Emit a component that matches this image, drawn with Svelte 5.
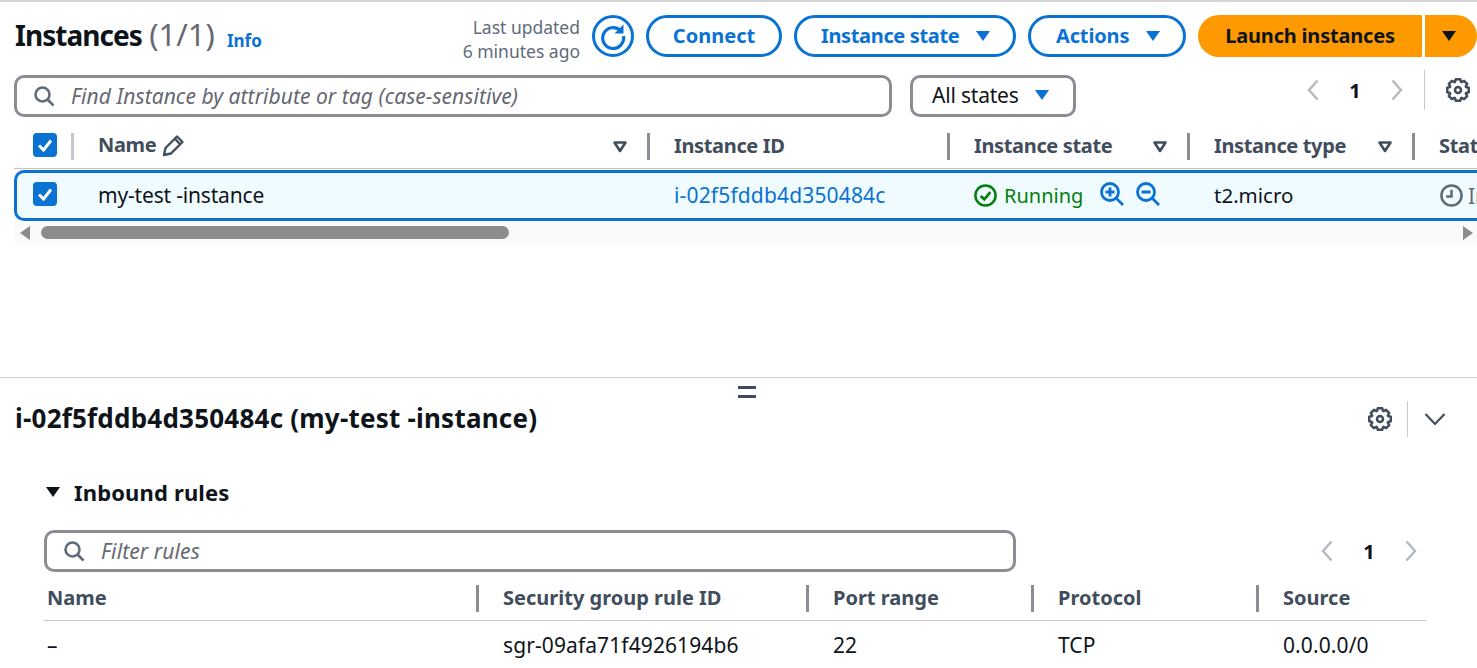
<script>
  const columns = [
    { label: 'Instance ID', sort: false },
    { label: 'Instance state', sort: true },
    { label: 'Instance type', sort: true }
  ];
  const ruleHeads = ['Name', 'Security group rule ID', 'Port range', 'Protocol', 'Source'];
  const ruleCells = ['–', 'sgr-09afa71f4926194b6', '22', 'TCP', '0.0.0.0/0'];

  // 8 toothed gear outline, same one for both settings buttons
  const gearPath = (() => {
    let d = '';
    for (let i = 0; i < 8; i++) {
      const a = (i * Math.PI) / 4;
      const pts = [
        [8.6, a - 0.36],
        [11, a - 0.2],
        [11, a + 0.2],
        [8.6, a + 0.36]
      ];
      for (const [r, t] of pts) {
        d += (d ? 'L' : 'M') + (12 + r * Math.cos(t)).toFixed(2) + ' ' + (12 + r * Math.sin(t)).toFixed(2);
      }
    }
    return d + 'z';
  })();
</script>

{#snippet caret()}
  <svg class="caret" viewBox="0 0 16 12" width="16" height="12"><path d="M1 1h14L8 11z" fill="currentColor" /></svg>
{/snippet}

{#snippet sortIcon()}
  <svg class="sort" viewBox="0 0 16 12" width="16" height="12"><path d="M2.5 1.5h11L8 10z" fill="none" stroke="currentColor" stroke-width="2.6" stroke-linejoin="round" /></svg>
{/snippet}

{#snippet search()}
  <svg viewBox="0 0 22 22" width="22" height="22"><circle cx="9.5" cy="9.5" r="7" fill="none" stroke="#5f6b7a" stroke-width="2.6" /><path d="M14.5 14.5l6 6" stroke="#5f6b7a" stroke-width="2.6" /></svg>
{/snippet}

{#snippet checkbox()}
  <span class="checkbox">
    <svg viewBox="0 0 24 24" width="24" height="24"><path d="M6 12.5l4.5 4.5L18 7.5" fill="none" stroke="#fff" stroke-width="3" /></svg>
  </span>
{/snippet}

{#snippet gear(cls)}
  <svg class={cls} viewBox="0 0 24 24" width="24" height="24">
    <path d={gearPath} fill="none" stroke="#414d5c" stroke-width="2.5" stroke-linejoin="round" />
    <circle cx="12" cy="12" r="3" fill="none" stroke="#414d5c" stroke-width="2.5" />
  </svg>
{/snippet}

{#snippet pager()}
  <div class="pager">
    <svg viewBox="0 0 12 22" width="12" height="22"><path d="M10.5 1.5L2 11l8.5 9.500" fill="none" stroke="#b4b9bf" stroke-width="2.4" /></svg>
    <span>1</span>
    <svg viewBox="0 0 12 22" width="12" height="22"><path d="M1.500 1.500L10 11l-8.500 9.500" fill="none" stroke="#b4b9bf" stroke-width="2.4" /></svg>
  </div>
{/snippet}

<div class="page">
  <section class="instances">
    <header class="top">
      <h1>Instances <span class="count">(1/1)</span></h1>
      <span class="info">Info</span>
      <div class="updated">Last updated<br />6 minutes ago</div>
      <button class="refresh" aria-label="Refresh">
        <svg viewBox="0 0 28 28" width="28" height="28">
          <path d="M21.500 8.500A10.500 10.500 0 1 0 24.500 14" fill="none" stroke="#0972d3" stroke-width="3.2" />
          <path d="M24.500 2.500v9h-9z" fill="#0972d3" />
        </svg>
      </button>
      <button class="btn connect">Connect</button>
      <button class="btn state">Instance state {@render caret()}</button>
      <button class="btn actions">Actions {@render caret()}</button>
      <div class="launch">
        <button class="launch-main">Launch instances</button>
        <button class="launch-drop" aria-label="More launch options">{@render caret()}</button>
      </div>
    </header>

    <div class="filters">
      <div class="search-box main-search">
        {@render search()}
        <span>Find Instance by attribute or tag (case-sensitive)</span>
      </div>
      <div class="select">All states {@render caret()}</div>
      <div class="filter-tools">
        {@render pager()}
        <span class="tool-divider"></span>
        {@render gear('tool-gear')}
      </div>
    </div>

    <div class="grid-wrap">
      <div class="grid head">
        <div class="cell check-cell">{@render checkbox()}<i class="sep"></i></div>
        <div class="cell name-head"><b>Name</b>
          <svg class="pencil" viewBox="0 0 24 24" width="24" height="24"><path d="M3 22l1.500-7L16 3.500l5.500 5.500L10 20.500z M14 6l5.500 5.500" fill="none" stroke="#414d5c" stroke-width="2.4" stroke-linejoin="round" /></svg>
          <span class="push">{@render sortIcon()}</span><i class="sep"></i>
        </div>
        {#each columns as col}
          <div class="cell"><b>{col.label}</b>
            {#if col.sort}<span class="push">{@render sortIcon()}</span>{/if}
            <i class="sep"></i>
          </div>
        {/each}
        <div class="cell"><b>Status check</b></div>
      </div>

      <div class="grid row">
        <div class="cell check-cell">{@render checkbox()}</div>
        <div class="cell name-cell">my-test -instance</div>
        <div class="cell link">i-02f5fddb4d350484c</div>
        <div class="cell running">
          <svg viewBox="0 0 26 26" width="25" height="25"><circle cx="13" cy="13" r="10.500" fill="none" stroke="#037f0c" stroke-width="2.600" /><path d="M8 13.500l3.800 3.500L18 9.500" fill="none" stroke="#037f0c" stroke-width="2.800" /></svg>
          <span>Running</span>
          <svg class="zoom-plus" viewBox="0 0 26 26" width="26" height="26"><circle cx="11" cy="11" r="8.500" fill="none" stroke="#0972d3" stroke-width="2.800" /><path d="M17 17l7 7M6.500 11h9M11 6.500v9" stroke="#0972d3" stroke-width="2.800" /></svg>
          <svg class="zoom-minus" viewBox="0 0 26 26" width="26" height="26"><circle cx="11" cy="11" r="8.500" fill="none" stroke="#0972d3" stroke-width="2.800" /><path d="M17 17l7 7M6.500 11h9" stroke="#0972d3" stroke-width="2.800" /></svg>
        </div>
        <div class="cell type-cell">t2.micro</div>
        <div class="cell pending">
          <svg viewBox="0 0 26 26" width="25" height="25"><circle cx="13" cy="13" r="10.500" fill="none" stroke="#5f6b7a" stroke-width="2.600" /><path d="M13 7v7H7.500" fill="none" stroke="#5f6b7a" stroke-width="2.600" /></svg>
          <span>Initializing</span>
        </div>
      </div>

      <div class="scrollbar">
        <svg viewBox="0 0 12 16" width="12" height="16"><path d="M11 1v14L1 8z" fill="#8c8c8c" /></svg>
        <div class="track"><div class="thumb"></div></div>
        <svg viewBox="0 0 12 16" width="12" height="16"><path d="M1 1v14l10-7z" fill="#8c8c8c" /></svg>
      </div>
    </div>
  </section>

  <section class="details">
    <div class="handle"><i></i><i></i></div>
    <div class="detail-head">
      <h2>i-02f5fddb4d350484c (my-test -instance)</h2>
      {@render gear('detail-gear')}
      <span class="detail-divider"></span>
      <svg class="collapse" viewBox="0 0 22 14" width="22" height="14"><path d="M1.500 2l9.500 10L20.500 2" fill="none" stroke="#414d5c" stroke-width="2.200" /></svg>
    </div>

    <div class="rules">
      <h3><svg viewBox="0 0 16 12" width="16" height="12"><path d="M1 1h14L8 11z" fill="#0f141a" /></svg>Inbound rules</h3>
      <div class="rule-filter">
        <div class="search-box rule-search">
          {@render search()}
          <span>Filter rules</span>
        </div>
        {@render pager()}
      </div>
      <div class="rule-grid rule-head">
        {#each ruleHeads as label, i}
          <div class="rule-cell"><b>{label}</b>{#if i < ruleHeads.length - 1}<i class="sep"></i>{/if}</div>
        {/each}
      </div>
      <div class="rule-grid rule-row">
        {#each ruleCells as value}
          <div class="rule-cell">{value}</div>
        {/each}
      </div>
    </div>
  </section>
</div>

<style>
  :global(body) {
    margin: 0;
    background: #fff;
    overflow: hidden;
  }

  .page {
    width: 1477px;
    height: 668px;
    overflow: hidden;
    font-family: 'Noto Sans', sans-serif;
    font-size: 20px;
    color: #0f141a;
    box-sizing: border-box;
    border-top: 2px solid #d5d5d5;
  }

  button {
    font-family: inherit;
    cursor: pointer;
    padding: 0;
  }

  .instances {
    height: 376px;
    padding: 13px 0 0 15px;
    box-sizing: border-box;
    border-bottom: 1px solid #d0d0d0;
  }

  .top {
    display: flex;
    align-items: center;
    height: 42px;
    white-space: nowrap;
  }

  h1 {
    margin: -4px 0 0;
    font-size: 28px;
    font-weight: 700;
    letter-spacing: -0.95px;
    line-height: 42px;
  }

  .count {
    font-size: 31px;
    font-weight: 400;
    letter-spacing: 0;
    color: #656871;
    margin-left: 1px;
  }

  .info {
    margin-left: 12px;
    margin-top: 8px;
    font-size: 17px;
    font-weight: 700;
    color: #0972d3;
  }

  .updated {
    margin-left: auto;
    margin-top: 6px;
    font-size: 17.5px;
    line-height: 24px;
    text-align: right;
    color: #5f6b7a;
  }

  .refresh {
    width: 42px;
    height: 42px;
    margin-left: 12px;
    border-radius: 50%;
    border: 3px solid #0972d3;
    background: #fff;
    display: flex;
    align-items: center;
    justify-content: center;
  }

  .btn {
    height: 42px;
    box-sizing: border-box;
    margin-left: 12px;
    padding-bottom: 2px;
    border: 3px solid #0972d3;
    border-radius: 21px;
    background: #fff;
    color: #0972d3;
    font-size: 20px;
    font-weight: 700;
    display: flex;
    align-items: center;
    justify-content: center;
  }

  .btn .caret {
    margin-left: 16px;
    margin-top: 2px;
    flex: none;
  }

  .connect { width: 136px; }

  .state {
    width: 222px;
    justify-content: flex-start;
    padding-left: 24px;
    letter-spacing: -0.35px;
  }

  .actions {
    width: 158px;
    justify-content: flex-start;
    padding-left: 25px;
    letter-spacing: -0.15px;
  }

  .launch {
    display: flex;
    margin-left: 12px;
    height: 42px;
  }

  .launch-main,
  .launch-drop {
    border: 0;
    background: #ff9900;
    color: #0f141a;
    font-size: 20px;
    font-weight: 700;
  }

  .launch-main {
    width: 224px;
    padding-bottom: 2px;
    border-radius: 21px 0 0 21px;
    letter-spacing: -0.2px;
  }

  .launch-drop {
    width: 52px;
    margin-left: 3px;
    border-radius: 0 21px 21px 0;
    display: flex;
    align-items: center;
    padding-left: 16px;
  }

  .filters {
    display: flex;
    margin-top: 18px;
    height: 42px;
  }

  .search-box {
    display: flex;
    align-items: center;
    box-sizing: border-box;
    height: 42px;
    border: 3px solid #8c8c94;
    border-radius: 10px;
    background: #fff;
    color: #656871;
    font-style: italic;
    font-size: 21px;
    letter-spacing: 0.05px;
  }

  .search-box svg {
    flex: none;
  }

  .main-search {
    width: 878px;
    margin-left: -1px;
    padding-left: 16px;
    gap: 16px;
    white-space: nowrap;
  }

  .select {
    display: flex;
    align-items: center;
    box-sizing: border-box;
    width: 166px;
    margin-left: 18px;
    padding: 0 0 2px 19px;
    border: 3px solid #8c8c94;
    border-radius: 10px;
    white-space: nowrap;
    font-size: 21px;
    letter-spacing: -0.2px;
  }

  .select .caret {
    margin-left: 15px;
    color: #0972d3;
  }

  .filter-tools {
    display: flex;
    align-items: center;
    height: 42px;
    margin-top: -6px;
    margin-left: 231px;
  }

  .pager {
    display: flex;
    align-items: center;
    font-weight: 700;
    font-size: 20px;
  }

  .pager span {
    width: 72px;
    text-align: center;
  }

  .tool-divider {
    width: 1px;
    height: 40px;
    margin-left: 21px;
    background: #c6c6cd;
  }

  .filter-tools :global(.tool-gear) {
    margin-left: 21px;
    flex: none;
  }

  .grid-wrap {
    margin-top: 13px;
    margin-left: -1px;
    width: 1463px;
    overflow: hidden;
    background: #fafafa;
    height: 113px;
  }

  .grid {
    display: grid;
    grid-template-columns: 59px 576px 300px 240px 225px 200px;
    width: 1600px;
    background: #fff;
  }

  .cell {
    display: flex;
    align-items: center;
    padding-left: 25px;
    position: relative;
    white-space: nowrap;
    min-width: 0;
    box-sizing: border-box;
  }

  .check-cell {
    padding-left: 19px;
  }

  .checkbox {
    width: 24px;
    height: 24px;
    border-radius: 4px;
    background: #0972d3;
    display: block;
  }

  .checkbox svg {
    display: block;
  }

  .head {
    height: 38px;
    border-bottom: 1px solid #c6c6cd;
    color: #414d5c;
  }

  .head b {
    font-weight: 700;
    font-size: 20px;
    letter-spacing: -0.35px;
  }

  .head .cell {
    padding-bottom: 8px;
  }

  .name-head b {
    margin-top: -2px;
  }

  .sep {
    position: absolute;
    right: 0;
    top: 3px;
    width: 3px;
    height: 27px;
    background: #8c8c94;
  }

  .head .sep {
    right: -1px;
  }

  .check-cell .sep {
    background: #c6c6cd;
  }

  .pencil {
    margin-left: 5px;
  }

  .push {
    position: absolute;
    right: 21px;
    top: 11px;
    color: #414d5c;
    display: block;
    line-height: 0;
  }

  .row {
    height: 51px;
    margin-top: 1px;
    background: #f0fbff;
    border: 3px solid #0972d3;
    border-radius: 10px;
    box-sizing: border-box;
    grid-template-columns: 56px 576px 300px 240px 225px 200px;
  }

  .row .check-cell {
    padding-left: 16px;
    padding-bottom: 3px;
  }

  .name-cell {
    font-size: 21px;
    letter-spacing: -0.18px;
    padding-bottom: 2px;
  }

  .link {
    color: #0972d3;
    font-size: 21px;
    letter-spacing: 0.16px;
    padding-bottom: 2px;
  }

  .running {
    color: #037f0c;
    padding-left: 24px;
  }

  .running > span {
    margin-left: 6px;
  }

  .zoom-plus {
    margin-left: 16px;
    margin-top: -3px;
  }

  .zoom-minus {
    margin-left: 10px;
    margin-top: -3px;
  }

  .type-cell {
    font-size: 20.5px;
    padding-bottom: 2px;
  }

  .pending {
    color: #5f6b7a;
  }

  .pending span {
    margin-left: 4px;
    font-size: 21px;
  }

  .scrollbar {
    display: flex;
    align-items: center;
    height: 23px;
    padding: 0 3px 0 5px;
  }

  .track {
    flex: 1;
    margin: 0 5px 0 10px;
  }

  .thumb {
    width: 468px;
    height: 13px;
    border-radius: 7px;
    background: #8c8c8c;
  }

  .details {
    position: relative;
    padding: 0 0 0 15px;
  }

  .handle {
    position: absolute;
    top: 8px;
    left: 738px;
    display: flex;
    flex-direction: column;
    gap: 6px;
  }

  .handle i {
    width: 18px;
    height: 3px;
    background: #414d5c;
    display: block;
  }

  .detail-head {
    display: flex;
    align-items: center;
    height: 36px;
    padding-top: 23px;
  }

  h2 {
    margin: -2px 0 0;
    font-size: 26px;
    font-weight: 700;
    line-height: 36px;
    flex: 1;
    letter-spacing: 0.22px;
    white-space: nowrap;
  }

  .detail-divider {
    width: 1px;
    height: 36px;
    margin: 0 16px 0 15px;
    background: #c6c6cd;
  }

  .collapse {
    margin-right: 31px;
  }

  .rules {
    padding-left: 29px;
    margin-top: 37px;
    width: 1382px;
  }

  h3 {
    margin: 0 0 0 1px;
    display: flex;
    align-items: center;
    gap: 13px;
    font-size: 22px;
    font-weight: 700;
    line-height: 36px;
    height: 36px;
    letter-spacing: 0.15px;
  }

  .rule-filter {
    display: flex;
    align-items: center;
    margin-top: 20px;
  }

  .rule-search {
    width: 972px;
    padding-left: 16px;
    gap: 16px;
    letter-spacing: 0.1px;
  }

  .rule-filter .pager {
    margin-left: 305px;
  }

  .rule-grid {
    display: grid;
    grid-template-columns: 435px 330px 225px 225px 167px;
  }

  .rule-head {
    height: 36px;
    margin-top: 13px;
    border-bottom: 1px solid #c6c6cd;
    box-sizing: border-box;
    color: #414d5c;
  }

  .rule-cell {
    position: relative;
    padding-left: 24px;
    display: flex;
    align-items: center;
    white-space: nowrap;
  }

  .rule-cell:first-child {
    padding-left: 3px;
  }

  .rule-head .rule-cell b {
    font-weight: 700;
  }

  .rule-head .rule-cell {
    height: 27px;
    box-sizing: border-box;
    padding-bottom: 2px;
  }

  .rule-head .sep {
    top: 0;
  }

  .rule-row {
    height: 48px;
    align-items: center;
    font-size: 21px;
    letter-spacing: 0.1px;
  }
</style>
